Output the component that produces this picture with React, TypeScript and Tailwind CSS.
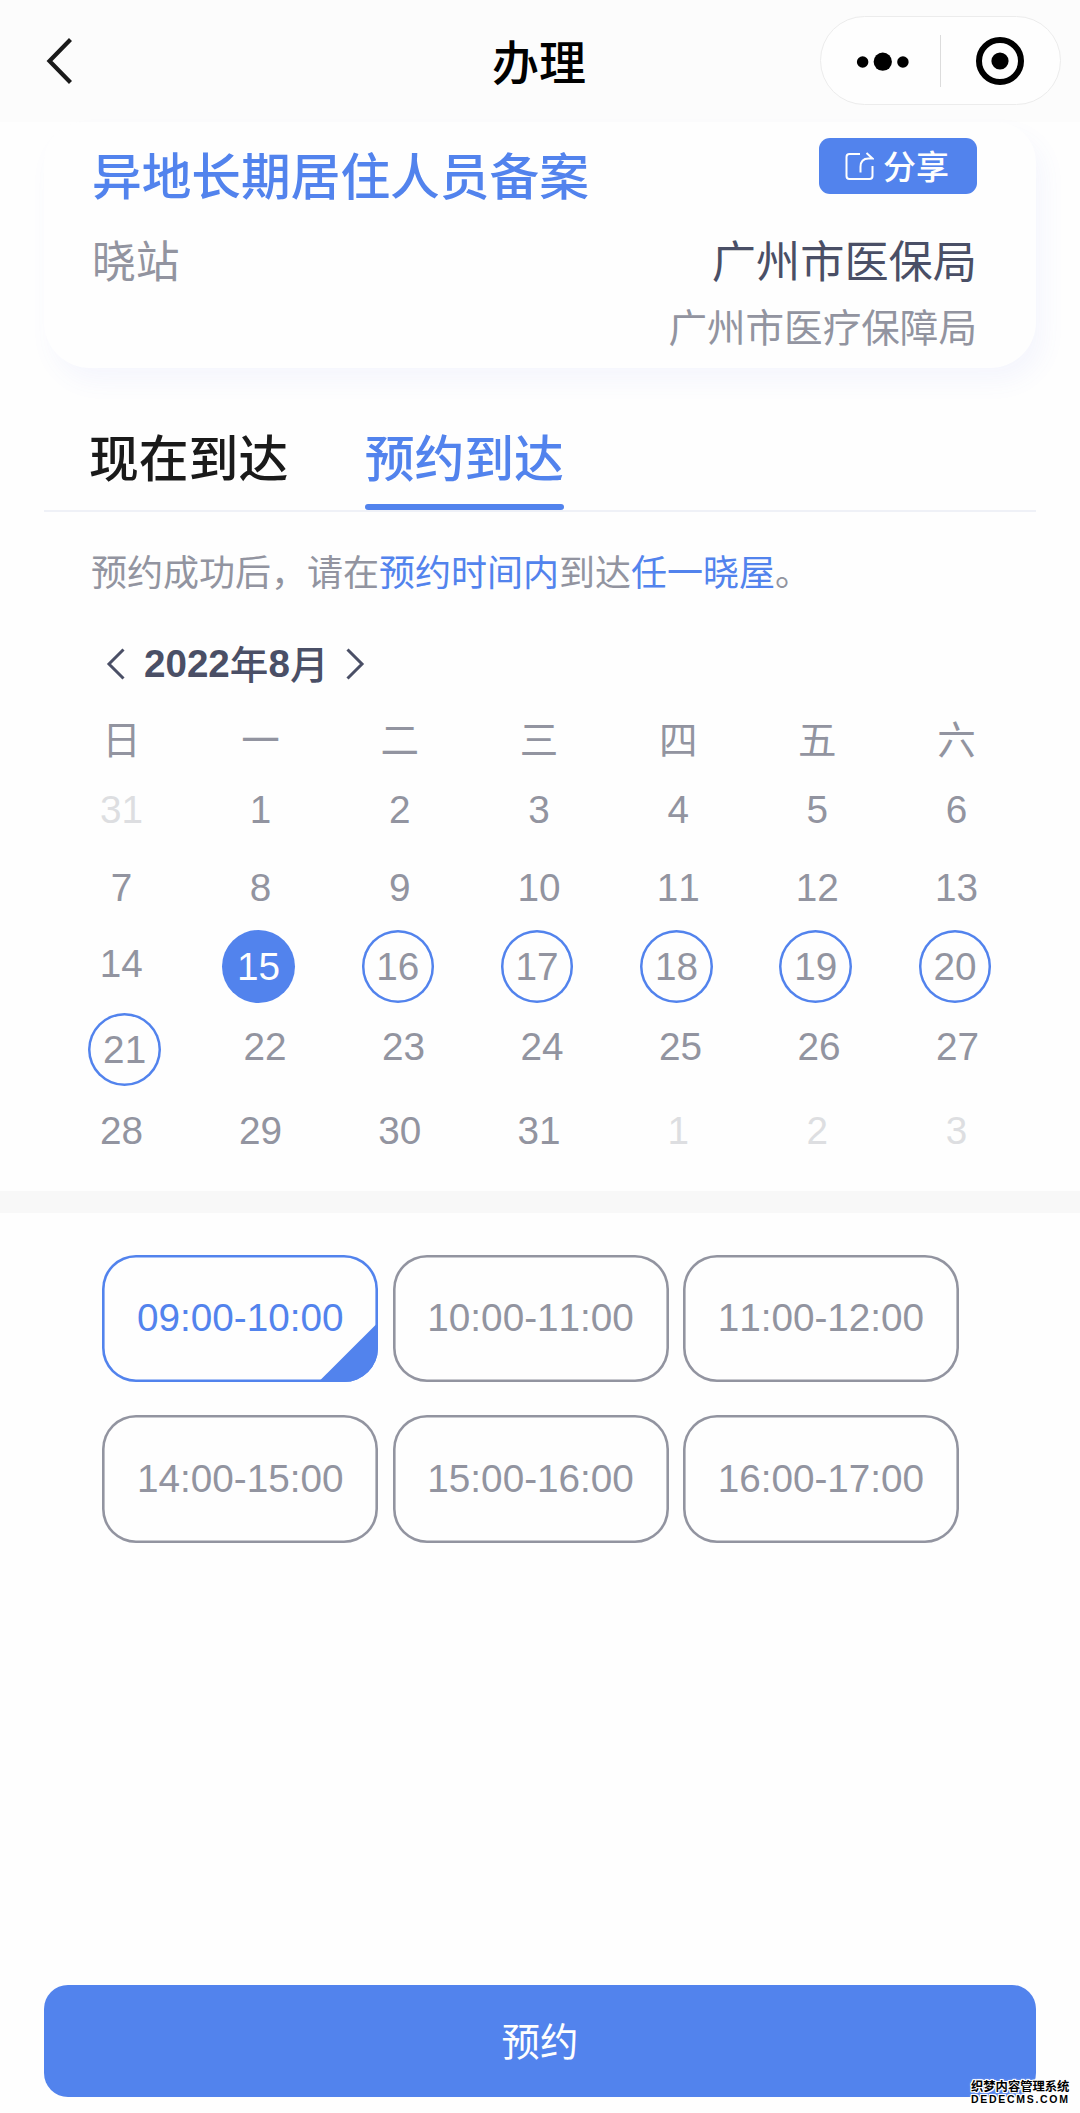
type Day = { n: number; state?: 'muted' | 'open' | 'selected' };
type Week = { row: string; days: Day[] };

const plain = (...list: number[]): Day[] => list.map((n) => ({ n }));
const open = (...list: number[]): Day[] => list.map((n) => ({ n, state: 'open' as const }));
const muted = (...list: number[]): Day[] => list.map((n) => ({ n, state: 'muted' as const }));

const regular = 'pl-[52px] grid-cols-[139px_repeat(6,139.2px)]';

const weeks: Week[] = [
  { row: `${regular} h-[78px]`, days: [...muted(31), ...plain(1, 2, 3, 4, 5, 6)] },
  { row: `${regular} h-[77px]`, days: plain(7, 8, 9, 10, 11, 12, 13) },
  {
    row: 'h-[76px] pl-[53.6px] grid-cols-[135.3px_repeat(6,139.3px)]',
    days: [{ n: 14 }, { n: 15, state: 'selected' }, ...open(16, 17, 18, 19, 20)],
  },
  {
    row: 'h-[90px] pl-[53.6px] grid-cols-[142.1px_repeat(6,138.5px)]',
    days: [...open(21), ...plain(22, 23, 24, 25, 26, 27)],
  },
  { row: `${regular} h-[77px]`, days: [...plain(28, 29, 30, 31), ...muted(1, 2, 3)] },
];

const slots = ['09:00-10:00', '10:00-11:00', '11:00-12:00', '14:00-15:00', '15:00-16:00', '16:00-17:00'];

function Header() {
  return (
    <header className="grid h-[122px] grid-cols-[1fr_auto_1fr] items-start bg-[#fcfcfc]">
      <svg className="ml-[43px] mt-[36px]" width="34" height="50" viewBox="0 0 34 50" fill="none">
        <path d="M27.5 3.5 6.5 25l21 21.5" stroke="#1a1a1a" strokeWidth="4.2" />
      </svg>
      <h1 className="mt-[36px] mr-[2px] text-[47px] leading-[48px] font-medium text-black">办理</h1>
      <div className="mt-4 mr-[19px] flex h-[89px] w-[241px] items-center justify-self-end rounded-full border border-[#ececec] bg-[#fefefe]">
        <svg width="120" height="52" viewBox="0 0 120 52" className="border-r border-[#dcdcdc]">
          <circle cx="42" cy="27" r="5.8" />
          <circle cx="62.3" cy="26.7" r="9.2" />
          <circle cx="82.6" cy="27" r="5.8" />
        </svg>
        <svg width="119" height="52" viewBox="0 0 119 52" fill="none">
          <circle cx="59" cy="26" r="21" stroke="#000" strokeWidth="6" />
          <circle cx="59" cy="26" r="8.6" fill="#000" />
        </svg>
      </div>
    </header>
  );
}

function MatterCard() {
  return (
    <section className="mx-[44px] flex h-[246px] justify-between rounded-t-[40px] rounded-b-[46px] bg-[#fefefe] pl-[48px] pr-[59px] shadow-[8px_14px_24px_rgba(82,110,237,0.055)]">
      <div>
        <h2 className="mt-[26px] text-[49.7px] leading-[50px] font-medium text-[#5283ed]">异地长期居住人员备案</h2>
        <p className="mt-[39px] text-[43.8px] leading-[44px] text-[#9294a0]">晓站</p>
      </div>
      <div className="flex flex-col items-end">
        <button className="mt-4 flex h-[56px] w-[158px] items-center rounded-[11px] bg-[#5283ed] pb-[2px] pl-[26px] text-[33px] leading-[33px] font-medium text-[#fefefe]">
          <svg width="29" height="29" viewBox="0 0 29 29" fill="none" stroke="currentColor" strokeWidth="2" className="mt-[2px] mr-[9px]">
            <path d="M15 2H4.5Q1.5 2 1.5 5v19q0 3 3 3h20q3 0 3-3V14" />
            <path d="M15.500 20.500V15q0-8.500 8-8.500h4L21.500 1" />
          </svg>
          分享
        </button>
        <p className="mt-[43px] text-[44.2px] leading-[44px] text-[#4a4f66]">广州市医保局</p>
        <p className="mt-[25px] text-[38.6px] leading-[39px] text-[#9294a0]">广州市医疗保障局</p>
      </div>
    </section>
  );
}

function Tabs() {
  return (
    <nav className="mx-[44px] mt-[58px] flex h-[86px] gap-[76.5px] border-b-[2px] border-[#eff1f7] pl-[45px] text-[49.8px] leading-[58px] font-medium">
      <button className="flex items-start text-[#1a1a1a]">现在到达</button>
      <button className="flex flex-col justify-between text-[#5283ed]">
        预约到达
        <span className="h-[6px] w-full rounded-full bg-[#5283ed]" />
      </button>
    </nav>
  );
}

function DayCell({ n, state }: Day) {
  if (state === 'selected')
    return <span className="flex size-[72.5px] items-center justify-center rounded-full bg-[#5283ed] text-[#fefefe]">{n}</span>;
  if (state === 'open')
    return (
      <span className="flex size-[72.5px] items-center justify-center rounded-full shadow-[inset_0_0_0_2.5px_#5283ed]">{n}</span>
    );
  return <span className={state === 'muted' ? 'mb-[5px] text-[#dddee1]' : 'mb-[5px]'}>{n}</span>;
}

function Calendar() {
  return (
    <section className="text-[#9294a0]">
      <div className="mt-[50px] flex h-[44px] items-center pl-[105px] text-[38.6px] leading-[44px] font-bold text-[#4a4f66]">
        <svg width="22" height="34" viewBox="0 0 22 34" fill="none" stroke="currentColor" strokeWidth="3">
          <path d="M18.500 2.500 4 17l14.500 14.500" />
        </svg>
        <p className="ml-[17px] flex">
          <span className="font-['Liberation_Sans']">2022</span>
          <span className="-mt-[2px] font-medium">年</span>
          <span className="font-['Liberation_Sans']">8</span>
          <span className="-mt-[2px] font-medium">月</span>
        </p>
        <svg width="22" height="34" viewBox="0 0 22 34" fill="none" stroke="currentColor" strokeWidth="3" className="ml-4">
          <path d="M3.500 2.500 18 17 3.500 31.500" />
        </svg>
      </div>
      <div className="mt-[28px] grid h-[46px] grid-cols-[139px_repeat(6,139.2px)] pl-[52px] text-center text-[38.5px] leading-[46px]">
        {['日', '一', '二', '三', '四', '五', '六'].map((d) => (
          <span key={d}>{d}</span>
        ))}
      </div>
      <div className="mt-[13.500px] font-['Liberation_Sans'] text-[38.7px] leading-[44px] [font-kerning:none]">
        {weeks.map((w, i) => (
          <div key={i} className={`grid items-center justify-items-center ${w.row}`}>
            {w.days.map((d) => (
              <DayCell key={d.n} {...d} />
            ))}
          </div>
        ))}
      </div>
    </section>
  );
}

function Slots() {
  return (
    <section className="grid grid-cols-[repeat(3,276px)] gap-x-[14.300px] gap-y-[33px] pt-[41.500px] pl-[102.300px] font-['Liberation_Sans'] text-[38.7px] leading-[44px] [font-kerning:none]">
      {slots.map((s, i) => (
        <button
          key={s}
          className={
            i === 0
              ? 'relative h-[127.6px] overflow-hidden rounded-[34px] text-[#5283ed] shadow-[inset_0_0_0_2.6px_#5283ed]'
              : 'h-[127.6px] rounded-[34px] text-[#9294a0] shadow-[inset_0_0_0_2.6px_#9294a0]'
          }
        >
          {s}
          {i === 0 && (
            <span className="absolute right-0 bottom-0 size-[60px] bg-[#5283ed] [clip-path:polygon(100%_0,100%_100%,0_100%)]" />
          )}
        </button>
      ))}
    </section>
  );
}

const outline =
  '[text-shadow:1px_0_#fff,-1px_0_#fff,0_1px_#fff,0_-1px_#fff,1px_1px_#fff,-1px_-1px_#fff,1px_-1px_#fff,-1px_1px_#fff,0_0_3px_#fff]';

export default function App() {
  return (
    <div className="relative flex h-[2113px] w-[1080px] flex-col overflow-hidden bg-[#fefefe] font-['Noto_Sans_CJK_SC',sans-serif]">
      <Header />
      <MatterCard />
      <Tabs />
      <p className="mt-[36px] pl-[91px] text-[36px] leading-[44px] text-[#9294a0]">
        预约成功后，请在<span className="text-[#5283ed]">预约时间内</span>到达
        <span className="text-[#5283ed]">任一晓屋</span>。
      </p>
      <Calendar />
      <div className="mt-[19.500px] h-[22px] shrink-0 bg-[#f8f8f8]" />
      <Slots />
      <button className="mx-[44px] mt-auto mb-4 h-[112px] shrink-0 rounded-[24px] bg-[#5283ed] pb-[5px] text-[38.4px] leading-[44px] text-[#fefefe]">
        预约
      </button>
      <div className={`absolute right-[9px] bottom-[8px] w-[100px] font-bold whitespace-nowrap text-black ${outline}`}>
        <p className="text-[12.3px] leading-[14px]">织梦内容管理系统</p>
        <p className="font-['Liberation_Sans'] text-[10.5px] leading-[12px] tracking-[1.7px]">DEDECMS.COM</p>
      </div>
    </div>
  );
}
